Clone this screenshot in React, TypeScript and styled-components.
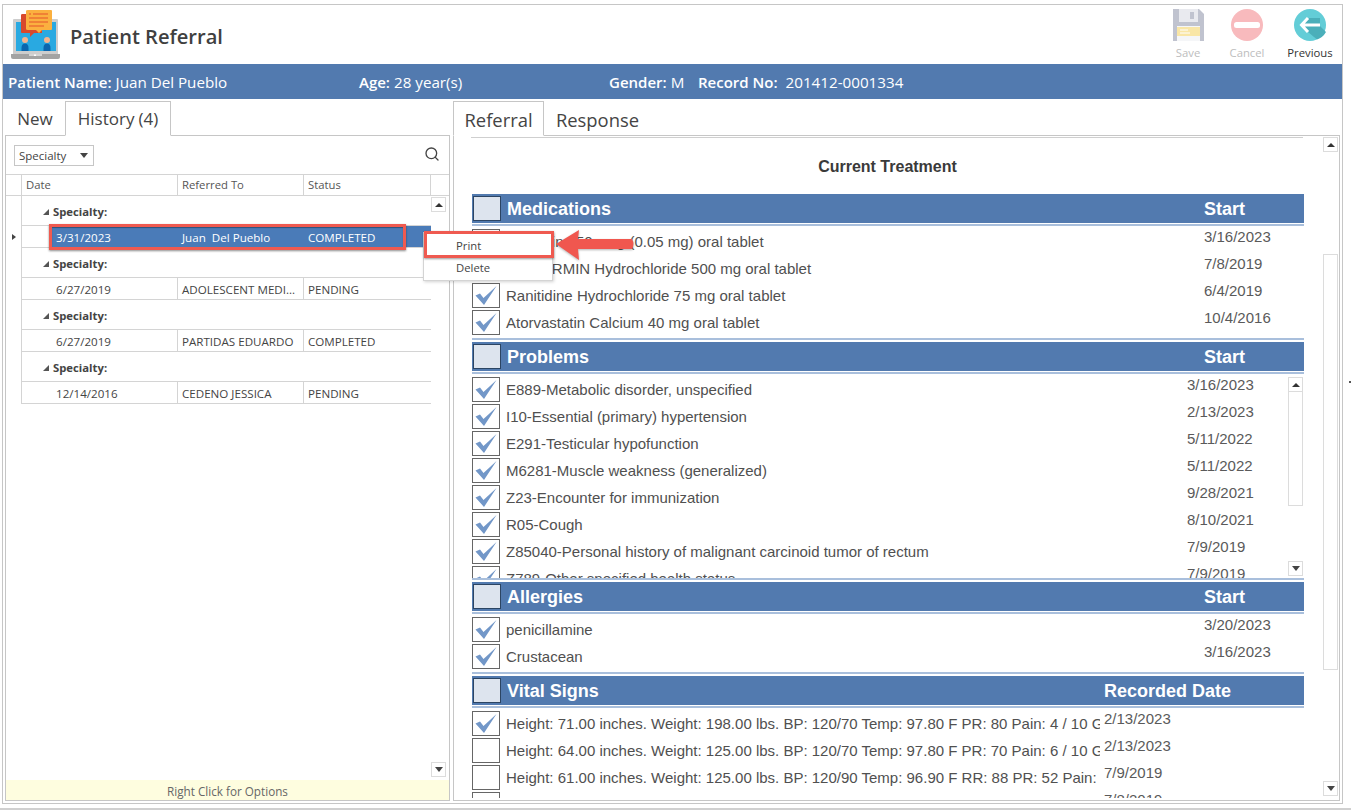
import React from "react";
import styled, { createGlobalStyle } from "styled-components";
import { Search } from "lucide-react";

const Global = createGlobalStyle`
  html, body { margin: 0; padding: 0; background: #fff; }
  * { box-sizing: border-box; }
`;
const UI = `"Open Sans", "Noto Sans", sans-serif`;
const ARIAL = `"Liberation Sans", Arial, sans-serif`;
const BLUE = "#527aaf";
const LINE = "#c6c6c6";

const Page = styled.div`
  position: relative; width: 1351px; height: 810px; overflow: hidden; padding: 4px 0 0 2px;
  font-family: ${UI}; background: #fff;
`;
const BottomLine = styled.div`
  position: absolute; left: 0; right: 0; top: 808px; height: 2px; background: #d0d0d0;
`;
const EdgeMark = styled.div`
  position: absolute; left: 1349px; top: 381px; width: 2px; height: 2px; background: #555;
`;
const Frame = styled.div`
  width: 1341px; height: 800px; border: 1px solid ${LINE};
  display: flex; flex-direction: column;
`;
const Header = styled.header`
  height: 59px; display: flex; align-items: flex-start; padding-left: 5px; flex: none;
`;
const Title = styled.h1`
  margin: 17px 0 0 10px; font-size: 20.1px; line-height: 30px; font-weight: 600; color: #404040; white-space: nowrap;
`;
const Actions = styled.div`
  margin-left: auto; display: flex;
`;
const Action = styled.div<{ $w: number; $off?: boolean }>`
  width: ${p => p.$w}px; display: flex; flex-direction: column; align-items: center; padding-top: 4px;
  font-size: 11.3px; line-height: 16px; color: ${p => (p.$off ? "#bdbdbd" : "#333")};
  svg { display: block; margin-bottom: 4px; }
`;
const PatientBar = styled.div`
  height: 35px; background: ${BLUE}; flex: none; display: flex; align-items: center; padding: 1px 0 0 5px;
  color: #fff; font-size: 15.2px; white-space: nowrap;
`;
const Field = styled.div<{ $w: number }>`
  width: ${p => p.$w}px; flex: none;
  b { font-weight: 600; font-size: 15px; margin-right: 4px; }
`;
const RecordValue = styled.span`
  margin-left: 4px;
`;
const Columns = styled.div`
  display: flex; padding-left: 2px; flex: none;
`;
const Col = styled.div<{ $w: number; $mr?: number }>`
  width: ${p => p.$w}px; margin-right: ${p => p.$mr ?? 0}px; display: flex; flex-direction: column;
`;
const Tabs = styled.div`
  height: 37px; display: flex; align-items: flex-end; flex: none; margin-bottom: -1px; position: relative;
`;
const Tab = styled.div<{ $active?: boolean; $w: number; $fs: number }>`
  width: ${p => p.$w}px; height: 35px; display: flex; align-items: center; justify-content: center;
  font-size: ${p => p.$fs}px; color: #444; white-space: nowrap; padding-top: ${p => (p.$fs > 18 ? 1 : 0)}px;
  border: 1px solid ${p => (p.$active ? LINE : "transparent")};
  border-bottom: 1px solid ${p => (p.$active ? "#fff" : "transparent")};
  background: ${p => (p.$active ? "#fff" : "transparent")};
  span { margin-left: 4px; }
`;
const Panel = styled.div`
  height: 666px; border: 1px solid ${LINE}; display: flex; flex-direction: column; overflow: hidden;
`;
const Toolbar = styled.div`
  height: 38px; flex: none; display: flex; align-items: flex-start; padding: 9px 9px 0 8px; justify-content: space-between;
  svg { margin-top: 1px; color: #444; }
`;
const Dropdown = styled.div`
  width: 80px; height: 21px; border: 1px solid ${LINE}; display: flex; align-items: center; justify-content: space-between;
  padding: 0 5px 0 4px; font-size: 11.5px; color: #444;
`;
const CaretDown = styled.i`
  width: 0; height: 0; border-left: 4.5px solid transparent; border-right: 4.5px solid transparent;
  border-top: 5px solid #444; display: block;
`;
const CaretUp = styled.i`
  width: 0; height: 0; border-left: 4px solid transparent; border-right: 4px solid transparent;
  border-bottom: 4px solid #333; display: block;
`;
const GridCols = styled.div`
  display: grid; grid-template-columns: 16px 156px 126px 127px;
`;
const GridHead = styled(GridCols)`
  height: 22px; flex: none; border-top: 1px solid #d4d4d4; border-bottom: 1px solid #d4d4d4;
  font-size: 11.3px; color: #555; line-height: 20px;
`;
const HeadCell = styled.div`
  border-right: 1px solid #d4d4d4; padding-left: 4px; white-space: nowrap;
  &:first-child { padding: 0; }
`;
const GridBody = styled.div`
  height: 584px; flex: none; display: flex;
`;
const Rows = styled.div`
  width: 425px; flex: none;
`;
const GroupRow = styled.div`
  height: 30px; display: flex;
`;
const Indicator = styled.div`
  width: 16px; flex: none; border-right: 1px solid #d4d4d4; display: flex; align-items: center; justify-content: center;
`;
const GroupLabel = styled.div`
  flex: 1; border-bottom: 1px solid #d4d4d4; display: flex; align-items: center; padding: 2px 0 0 21px;
  font-size: 11.3px; font-weight: 700; color: #444;
`;
const Expander = styled.i`
  width: 0; height: 0; border-left: 6px solid transparent; border-bottom: 6px solid #555; display: block; margin-right: 4px;
`;
const RowPointer = styled.i`
  width: 0; height: 0; border-top: 3.5px solid transparent; border-bottom: 3.5px solid transparent; border-left: 4px solid #444; display: block;
`;
const DataRow = styled.div`
  height: 22px; display: flex;
`;
const Cells = styled.div<{ $selected?: boolean }>`
  margin-left: 28px; flex: 1; display: grid; grid-template-columns: 128px 126px 127px; font-size: 11.6px; line-height: 23px;
  color: ${p => (p.$selected ? "#fff" : "#444")}; background: ${p => (p.$selected ? "#4a7bb8" : "transparent")};
  position: relative;
  &::after { content: ""; position: absolute; left: -28px; right: 0; bottom: 0; height: 1px; background: #d4d4d4; }
`;
const Cell = styled.div<{ $first?: boolean; $selected?: boolean }>`
  padding-left: ${p => (p.$first ? 6 : 4)}px; white-space: pre; overflow: hidden;
  border-right: 1px solid ${p => (p.$selected ? "transparent" : "#d4d4d4")};
  &:last-child { border-right: none; }
`;
const SideBar = styled.div`
  width: 15px; flex: none; display: flex; flex-direction: column; justify-content: space-between; padding: 1px 0 3px;
`;
const ArrowBtn = styled.div`
  width: 15px; height: 15px; border: 1px solid #dcdcdc; display: flex; align-items: center; justify-content: center; flex: none; background: #fff;
`;
const Hint = styled.div`
  height: 20px; flex: none; background: #fefddf; text-align: center; font-size: 11.7px; line-height: 22px; color: #666; overflow: hidden;
`;
const RightBody = styled.div`
  flex: 1; display: flex; min-height: 0;
`;
const Content = styled.div`
  width: 869px; flex: none; height: 662px; padding: 1px 0 0 17px; overflow: hidden;
`;
const TopRule = styled.div`
  height: 1px; width: 832px; background: #cfcfcf;
`;
const Heading = styled.div`
  height: 52px; width: 833px; text-align: center; font: 700 16px/57px ${ARIAL}; color: #3a3a3a;
`;
const SectionHead = styled.div<{ $date: number; $first?: boolean }>`
  width: 832px; margin-left: 1px; height: 36px; padding: 2px 0 1px; display: grid; grid-template-columns: 1fr ${p => p.$date}px;
  align-items: center; position: relative; background: ${BLUE}; background-clip: content-box;
  color: #fff; font: 700 18px/29px ${ARIAL};
  border-top: 2px solid ${p => (p.$first ? "transparent" : "#a9bfdc")}; border-bottom: 2px solid #a9bfdc;
`;
const HeadLeft = styled.div`
  display: flex; align-items: center; padding-left: 1px;
`;
const Box = styled.div<{ $head?: boolean }>`
  width: 28px; height: 25px; flex: none; border: 1px solid ${p => (p.$head ? "#2c4563" : "#666")};
  background: ${p => (p.$head ? "#dde4ee" : "#fff")}; display: flex; align-items: center; justify-content: center;
`;
const HeadText = styled.span`
  display: block; height: 29px; line-height: 31px; margin-left: 6px;
`;
const HeadLabel = styled.div`
  height: 29px; line-height: 31px;
`;
const List = styled.div<{ $h?: number }>`
  padding-top: 3px; padding-bottom: 1px; width: 832px; margin-left: 1px; ${p => (p.$h ? `height: ${p.$h}px; overflow: hidden; position: relative;` : "")}
`;
const ItemRow = styled.div<{ $date: number; $bar?: boolean }>`
  height: 27px; display: grid; grid-template-columns: 28px 1fr ${p => p.$date}px; font: 15px/26px ${ARIAL}; color: #505050; white-space: nowrap;
  padding-right: ${p => (p.$bar ? 16 : 0)}px;
`;
const ItemText = styled.div`
  padding-left: 6px; overflow: hidden; margin-right: 4px;
`;
const ItemDate = styled.div`
  line-height: 15px; color: #5a5a5a;
`;
const InnerBar = styled.div`
  position: absolute; right: 0; top: 3px; bottom: 2px; width: 16px; display: flex; flex-direction: column;
`;
const InnerThumb = styled.div`
  width: 15px; height: 114px; border: 1px solid #dcdcdc; border-top: none;
`;
const Spacer = styled.div`
  flex: 1;
`;
const MainBar = styled.div`
  width: 15px; height: 662px; padding: 1px 0 2px; display: flex; flex-direction: column;
`;
const MainThumb = styled.div`
  width: 15px; height: 416px; margin-top: 102px; border: 1px solid #dcdcdc;
`;
const RedBox = styled.div`
  position: absolute; left: 49px; top: 224px; width: 357px; height: 26px; border: 3px solid #ef5a50;
  box-shadow: 0 1px 2px rgba(0,0,0,.45), inset 0 1px 1px rgba(0,0,0,.35);
`;
const Menu = styled.div`
  position: absolute; left: 423px; top: 232px; width: 130px; height: 49px; background: #fff; border: 1px solid #d4d4d4;
  box-shadow: 1px 1px 3px rgba(0,0,0,.18); font-size: 11.3px; color: #444; padding-top: 2px;
`;
const MenuItem = styled.div`
  height: 22px; line-height: 22px; padding-left: 32px;
`;
const PrintBox = styled.div`
  position: absolute; left: 424px; top: 231px; width: 130px; height: 27px; border: 3px solid #ef5a50;
  box-shadow: 0 1px 2px rgba(0,0,0,.4);
`;
const Arrow = styled.svg`
  position: absolute; left: 552px; top: 226px; filter: drop-shadow(0 1px 1px rgba(0,0,0,.3));
`;

const Check = () => (
  <svg width="24" height="21" viewBox="0 0 24 21">
    <path d="M1.5 10.5 L6 8.5 L9.5 13 L22.5 1 L10 20 Z" fill="#7297c8" />
  </svg>
);

const Logo = () => (
  <svg width="52" height="52" viewBox="0 0 52 52" style={{ marginTop: 5, flex: "none" }}>
    <path d="M5 10 Q5 9 6 9 H49 Q50 9 50 10 V44 H5 Z" fill="#cdcdcd" />
    <rect x="8" y="12" width="40" height="29" fill="#29a9e1" />
    <path d="M3 44 H52 V47 Q52 49 50 49 H5 Q3 49 3 47 Z" fill="#a3a3a3" />
    <rect x="21" y="44" width="13" height="2" fill="#d4d4d4" />
    <rect x="26" y="44.5" width="2" height="1.5" fill="#fff" />
    <circle cx="17" cy="30" r="3" fill="#f4b48e" />
    <path d="M13.5 38 Q13.5 33.5 17 33.5 Q20.5 33.5 20.5 38 V41 H13.5 Z" fill="#0b66ae" />
    <circle cx="39" cy="30" r="3" fill="#f4b48e" />
    <path d="M35.5 38 Q35.5 33.5 39 33.5 Q42.5 33.5 42.5 38 V41 H35.5 Z" fill="#0b66ae" />
    <path d="M14.5 4 H34 V23 H26 L22 27 V23 H14 Q13 23 13 22 V5 Q13 4 14.5 4 Z" fill="#d8492c" />
    <path d="M20 0 H43 Q44 0 44 1 V19 Q44 20 43 20 H34 L31 23 L28 20 H20 Q18 20 18 19 V1 Q18 0 20 0 Z" fill="#fbb03f" />
    <path d="M21 4 H23 M25 4 H40 M21 8 H40 M21 12 H40 M21 16 H36" stroke="#e5532d" strokeWidth="1.2" />
  </svg>
);

const SaveIcon = () => (
  <svg width="31" height="32" viewBox="0 0 31 32">
    <path d="M0 0 H26 L31 5 V32 H0 Z" fill="#c0c3cf" />
    <rect x="6" y="0" width="19" height="13" fill="#e9eaef" />
    <rect x="17" y="3" width="4" height="7" fill="#c0c3cf" />
    <rect x="4" y="17" width="23" height="15" fill="#f5f6f8" />
    <rect x="4" y="18" width="23" height="9" fill="#f9e6a6" />
    <path d="M7 21 H15 M7 24 H17" stroke="#fff" strokeWidth="1" />
  </svg>
);
const CancelIcon = () => (
  <svg width="32" height="32" viewBox="0 0 32 32">
    <circle cx="16" cy="16" r="16" fill="#f8babd" />
    <rect x="3" y="13" width="26" height="6" rx="2.5" fill="#fff" />
  </svg>
);
const PrevIcon = () => (
  <svg width="32" height="32" viewBox="0 0 32 32">
    <circle cx="16" cy="16" r="16" fill="#63cdd7" />
    <path d="M7 16 L15 9 H26 V17 L32 23 A16 16 0 0 1 23 30.5 L14 23 Z" fill="#4bafba" />
    <path d="M14 9 L7.5 16 L14 23 M8 16 H26" stroke="#fff" strokeWidth="3" fill="none" />
  </svg>
);

type Item = { t: string; d: string; c?: boolean };
const meds: Item[] = [
  { t: "Thyroxine 50 mcg (0.05 mg) oral tablet", d: "3/16/2023", c: true },
  { t: "MetFORMIN Hydrochloride 500 mg oral tablet", d: "7/8/2019", c: true },
  { t: "Ranitidine Hydrochloride 75 mg oral tablet", d: "6/4/2019", c: true },
  { t: "Atorvastatin Calcium 40 mg oral tablet", d: "10/4/2016", c: true },
];
const problems: Item[] = [
  { t: "E889-Metabolic disorder, unspecified", d: "3/16/2023", c: true },
  { t: "I10-Essential (primary) hypertension", d: "2/13/2023", c: true },
  { t: "E291-Testicular hypofunction", d: "5/11/2022", c: true },
  { t: "M6281-Muscle weakness (generalized)", d: "5/11/2022", c: true },
  { t: "Z23-Encounter for immunization", d: "9/28/2021", c: true },
  { t: "R05-Cough", d: "8/10/2021", c: true },
  { t: "Z85040-Personal history of malignant carcinoid tumor of rectum", d: "7/9/2019", c: true },
  { t: "Z789-Other specified health status", d: "7/9/2019", c: true },
];
const allergies: Item[] = [
  { t: "penicillamine", d: "3/20/2023", c: true },
  { t: "Crustacean", d: "3/16/2023", c: true },
];
const vitals: Item[] = [
  { t: "Height: 71.00 inches. Weight: 198.00 lbs. BP: 120/70 Temp: 97.80 F PR: 80 Pain: 4 / 10 GCS: 15", d: "2/13/2023", c: true },
  { t: "Height: 64.00 inches. Weight: 125.00 lbs. BP: 120/70 Temp: 97.80 F PR: 70 Pain: 6 / 10 GCS: 15", d: "2/13/2023" },
  { t: "Height: 61.00 inches. Weight: 125.00 lbs. BP: 120/90 Temp: 96.90 F RR: 88 PR: 52 Pain:", d: "7/9/2019" },
  { t: "Height: 62.00 inches. Weight: 125.00 lbs.", d: "7/8/2019" },
];
const history = [
  { d: "3/31/2023", r: "Juan  Del Pueblo", s: "COMPLETED", sel: true },
  { d: "6/27/2019", r: "ADOLESCENT MEDI...", s: "PENDING" },
  { d: "6/27/2019", r: "PARTIDAS EDUARDO", s: "COMPLETED" },
  { d: "12/14/2016", r: "CEDENO JESSICA", s: "PENDING" },
];

const Rowset = ({ items, date, bar }: { items: Item[]; date: number; bar?: boolean }) => (
  <>
    {items.map((it, i) => (
      <ItemRow key={i} $date={date} $bar={bar}>
        <Box>{it.c && <Check />}</Box>
        <ItemText>{it.t}</ItemText>
        <ItemDate>{it.d}</ItemDate>
      </ItemRow>
    ))}
  </>
);

const Section = ({ title, label, date, first }: { title: string; label: string; date: number; first?: boolean }) => (
  <SectionHead $date={date} $first={first}>
    <HeadLeft><Box $head /><HeadText>{title}</HeadText></HeadLeft>
    <HeadLabel>{label}</HeadLabel>
  </SectionHead>
);

export default function App() {
  return (
    <Page>
      <Global />
      <Frame>
        <Header>
          <Logo />
          <Title>Patient Referral</Title>
          <Actions>
            <Action $w={56} $off><SaveIcon />Save</Action>
            <Action $w={62} $off><CancelIcon />Cancel</Action>
            <Action $w={64}><PrevIcon />Previous</Action>
          </Actions>
        </Header>
        <PatientBar>
          <Field $w={351}><b>Patient Name:</b>Juan Del Pueblo</Field>
          <Field $w={250}><b>Age:</b>28 year(s)</Field>
          <Field $w={89}><b>Gender:</b>M</Field>
          <Field $w={300}><b>Record No:</b><RecordValue>201412-0001334</RecordValue></Field>
        </PatientBar>
        <Columns>
          <Col $w={445} $mr={3}>
            <Tabs>
              <Tab $w={60} $fs={17}>New</Tab>
              <Tab $w={106} $fs={17} $active>History<span>(4)</span></Tab>
            </Tabs>
            <Panel>
              <Toolbar>
                <Dropdown>Specialty<CaretDown /></Dropdown>
                <Search size={16} strokeWidth={2} />
              </Toolbar>
              <GridHead>
                <HeadCell />
                <HeadCell>Date</HeadCell>
                <HeadCell>Referred To</HeadCell>
                <HeadCell>Status</HeadCell>
              </GridHead>
              <GridBody>
                <Rows>
                  {history.map((h, i) => (
                    <React.Fragment key={i}>
                      <GroupRow>
                        <Indicator />
                        <GroupLabel><Expander />Specialty:</GroupLabel>
                      </GroupRow>
                      <DataRow>
                        <Indicator>{h.sel && <RowPointer />}</Indicator>
                        <Cells $selected={h.sel}>
                          <Cell $first $selected={h.sel}>{h.d}</Cell>
                          <Cell $selected={h.sel}>{h.r}</Cell>
                          <Cell $selected={h.sel}>{h.s}</Cell>
                        </Cells>
                      </DataRow>
                    </React.Fragment>
                  ))}
                </Rows>
                <SideBar>
                  <ArrowBtn><CaretUp /></ArrowBtn>
                  <ArrowBtn><CaretDown /></ArrowBtn>
                </SideBar>
              </GridBody>
              <Hint>Right Click for Options</Hint>
            </Panel>
          </Col>
          <Col $w={887}>
            <Tabs>
              <Tab $w={91} $fs={18.4} $active>Referral</Tab>
              <Tab $w={107} $fs={18.4}>Response</Tab>
            </Tabs>
            <Panel>
              <RightBody>
                <Content>
                  <TopRule />
                  <Heading>Current Treatment</Heading>
                  <Section title="Medications" label="Start" date={100} first />
                  <List><Rowset items={meds} date={100} /></List>
                  <Section title="Problems" label="Start" date={100} />
                  <List $h={204}>
                    <Rowset items={problems} date={101} bar />
                    <InnerBar>
                      <ArrowBtn><CaretUp /></ArrowBtn>
                      <InnerThumb />
                      <Spacer />
                      <ArrowBtn><CaretDown /></ArrowBtn>
                    </InnerBar>
                  </List>
                  <Section title="Allergies" label="Start" date={100} />
                  <List><Rowset items={allergies} date={100} /></List>
                  <Section title="Vital Signs" label="Recorded Date" date={200} />
                  <List><Rowset items={vitals} date={200} /></List>
                </Content>
                <MainBar>
                  <ArrowBtn><CaretUp /></ArrowBtn>
                  <MainThumb />
                  <Spacer />
                  <ArrowBtn><CaretDown /></ArrowBtn>
                </MainBar>
              </RightBody>
            </Panel>
          </Col>
        </Columns>
      </Frame>
      <RedBox />
      <Menu>
        <MenuItem>Print</MenuItem>
        <MenuItem>Delete</MenuItem>
      </Menu>
      <PrintBox />
      <Arrow width="84" height="36" viewBox="0 0 84 36">
        <path d="M4 18 L27 4 L26 13 L80 13 Q83 18 80 23 L26 23 L27 34 Z" fill="#f0574f" />
      </Arrow>
      <BottomLine />
      <EdgeMark />
    </Page>
  );
}
